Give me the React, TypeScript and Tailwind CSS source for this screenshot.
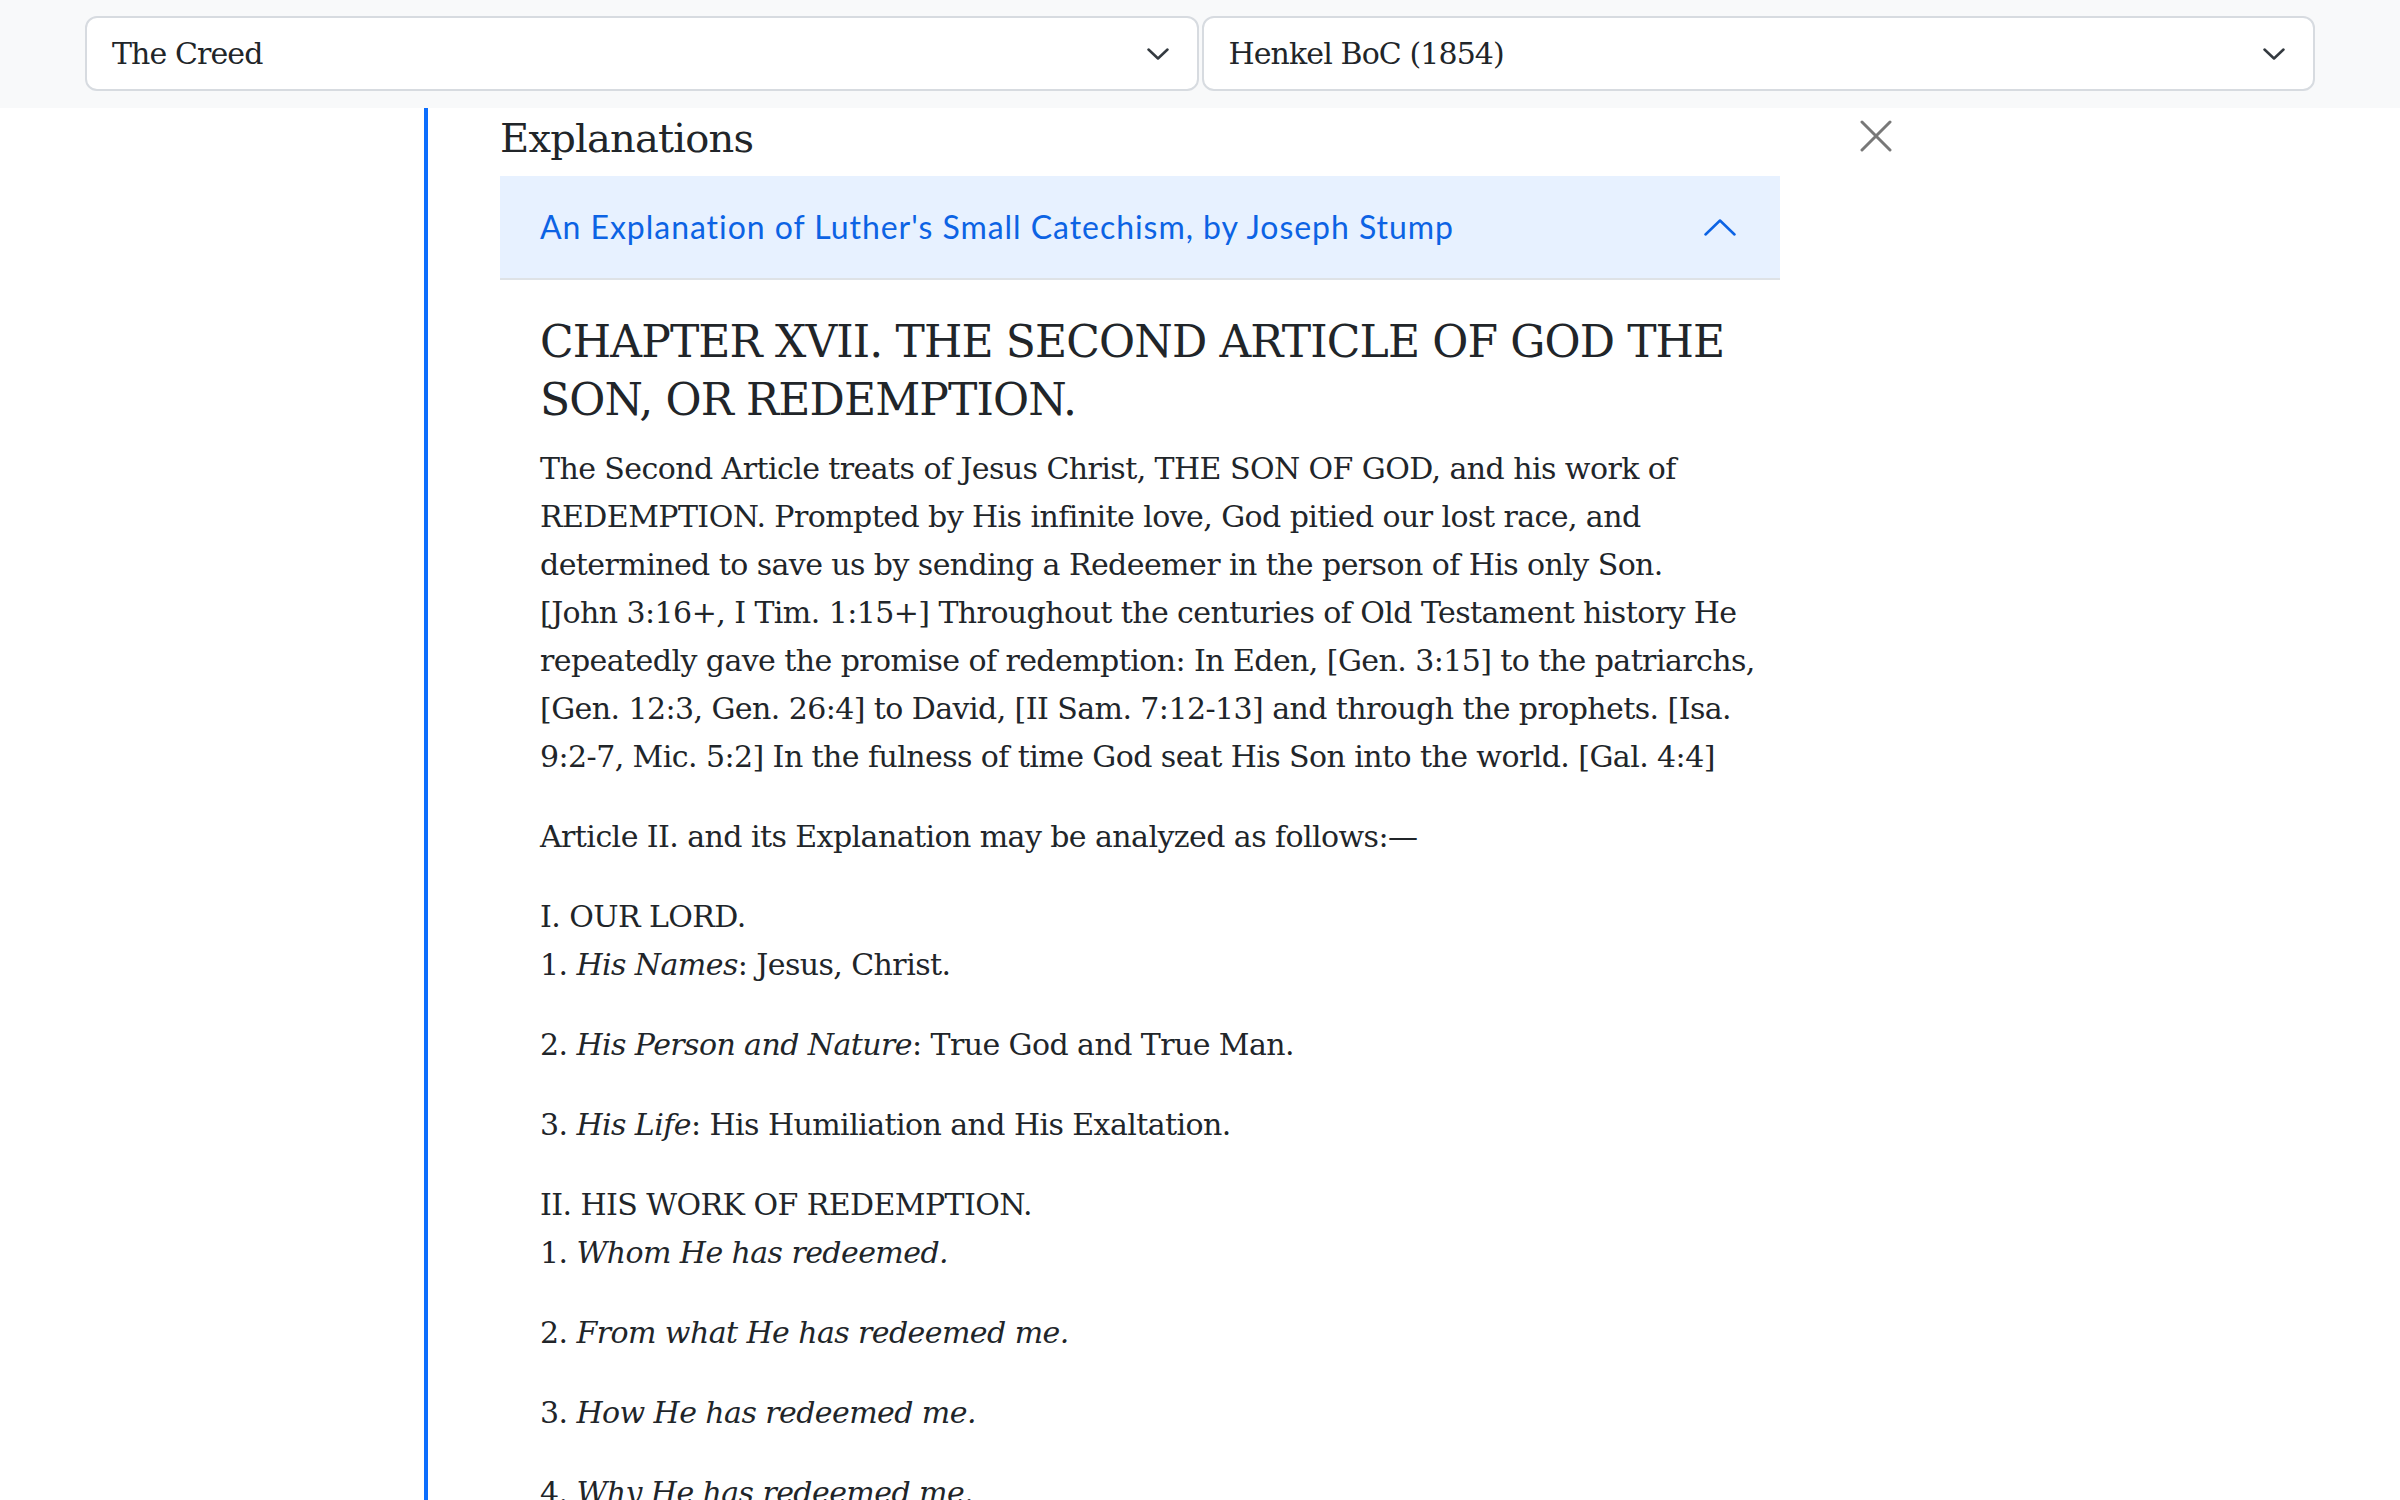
import type { ReactNode } from "react";

function ChevronDown() {
  return (
    <svg aria-hidden viewBox="0 0 22 12" fill="none" className="h-[12px] w-[22px]">
      <path
        d="M1.5 1.5L11 10.5l9.5-9"
        stroke="#343a40"
        strokeWidth="2.5"
        strokeLinecap="round"
        strokeLinejoin="round"
      />
    </svg>
  );
}

function SelectBox({ label }: { label: string }) {
  return (
    <div className="flex h-[75px] flex-1 items-center justify-between rounded-[12px] border-2 border-[#d7dbe0] bg-white pl-[25px] pr-[28px]">
      <span className="text-[30px] tracking-[-0.03em]">{label}</span>
      <ChevronDown />
    </div>
  );
}

function CloseIcon() {
  return (
    <svg aria-hidden viewBox="0 0 32 32" fill="none" className="size-8">
      <path
        d="M2 2l28 28M30 2L2 30"
        stroke="#787878"
        strokeWidth="3"
        strokeLinecap="round"
      />
    </svg>
  );
}

function ChevronUp() {
  return (
    <svg aria-hidden viewBox="0 0 32 17" fill="none" className="h-[17px] w-[32px]">
      <path
        d="M1.5 15.5L16 1.5l14.5 14"
        stroke="#0c63e4"
        strokeWidth="2.5"
        strokeLinecap="round"
        strokeLinejoin="round"
      />
    </svg>
  );
}

function Para({ children }: { children: ReactNode }) {
  return <p className="mb-[32px]">{children}</p>;
}

export default function App() {
  return (
    <div className="min-h-screen bg-white font-['DejaVu_Serif',serif] text-[#212529]">
      <header className="flex gap-[3px] bg-[#f8f9fa] px-[85px] pb-[17px] pt-4">
        <SelectBox label="The Creed" />
        <SelectBox label="Henkel BoC (1854)" />
      </header>

      <div className="flex">
        <div className="w-[424px] shrink-0" />
        <main className="min-h-[1392px] border-l-4 border-[#0d6efd] pl-[72px]">
          <div className="mt-[5px] flex w-[1392px] items-center justify-between">
            <h3 className="text-[40px] leading-[50px] tracking-[-0.02em]">Explanations</h3>
            <button type="button" aria-label="Close" className="-mt-1">
              <CloseIcon />
            </button>
          </div>

          <section className="mt-[13px] w-[1280px]">
            <button
              type="button"
              className="flex h-[104px] w-full items-center justify-between border-b-2 border-[#dee2e6] bg-[#e7f1ff] pl-[40px] pr-[44px] text-left"
            >
              <span className="font-['Lato',sans-serif] text-[32px] tracking-[0.03em] text-[#0c63e4]">
                An Explanation of Luther's Small Catechism, by Joseph Stump
              </span>
              <ChevronUp />
            </button>

            <div className="pl-[40px] pt-[33px] text-[30px] leading-[48px] tracking-[-0.019em]">
              <h2 className="mb-[16px] text-[44px] leading-[58px] tracking-[-0.02em]">
                CHAPTER XVII. THE SECOND ARTICLE OF GOD THE SON, OR REDEMPTION.
              </h2>
              <Para>
                The Second Article treats of Jesus Christ, THE SON OF GOD, and his work of
                REDEMPTION. Prompted by His infinite love, God pitied our lost race, and
                determined to save us by sending a Redeemer in the person of His only Son.
                <br />
                [John 3:16+, I Tim. 1:15+] Throughout the centuries of Old Testament history
                He repeatedly gave the promise of redemption: In Eden, [Gen. 3:15] to the
                patriarchs, [Gen. 12:3, Gen. 26:4] to David, [II Sam. 7:12-13] and through
                the prophets. [Isa. 9:2-7, Mic. 5:2] In the fulness of time God seat His Son
                into the world. [Gal. 4:4]
              </Para>
              <Para>Article II. and its Explanation may be analyzed as follows:—</Para>
              <Para>
                I. OUR LORD.
                <br />
                1. <em>His Names</em>: Jesus, Christ.
              </Para>
              <Para>
                2. <em>His Person and Nature</em>: True God and True Man.
              </Para>
              <Para>
                3. <em>His Life</em>: His Humiliation and His Exaltation.
              </Para>
              <Para>
                II. HIS WORK OF REDEMPTION.
                <br />
                1. <em>Whom He has redeemed.</em>
              </Para>
              <Para>
                2. <em>From what He has redeemed me.</em>
              </Para>
              <Para>
                3. <em>How He has redeemed me.</em>
              </Para>
              <Para>
                4. <em>Why He has redeemed me.</em>
              </Para>
            </div>
          </section>
        </main>
      </div>
    </div>
  );
}
